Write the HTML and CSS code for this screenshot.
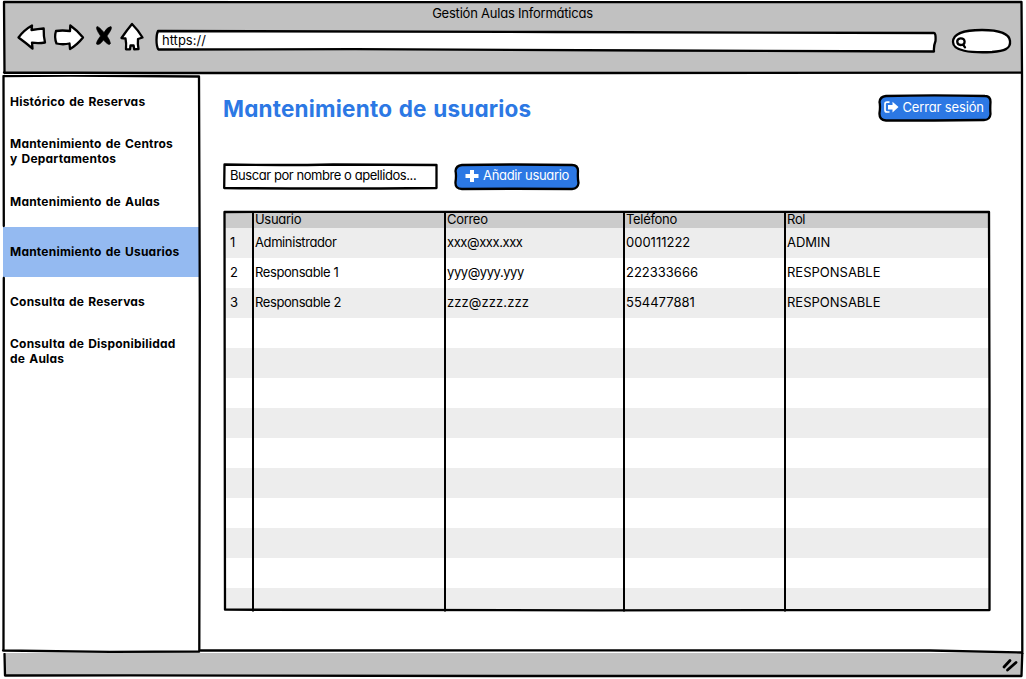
FILE: index.html
```html
<!DOCTYPE html>
<html lang="es">
<head>
<meta charset="utf-8">
<title>Gestión Aulas Informáticas</title>
<link rel="stylesheet" href="styles.css">
</head>
<body>
<div class="browser">
  <header class="chrome">
    <svg class="sketch" viewBox="0 0 1026 75" width="1026" height="75">
      <path class="gray" d="M4 2H1022V73H4Z"/>
      <path class="ink" d="M4.500 73L4 2L500 2.200L1021.500 2L1022 75M4 72.500L150 73L600 73L1022 72.600"/>
    </svg>
    <div class="chrome-title">Gestión Aulas Informáticas</div>
    <div class="toolbar">
      <svg class="nav-icons" viewBox="16 22 130 30" width="130" height="30">
        <path class="ink paper" d="M18.500 37.500Q24 30 32 25.500L31.500 30Q38 29 43.700 28.500Q43.500 36 45 42.500Q39 43.500 32 42.700L32.500 48.500Q26 43 18.500 37.500Z"/>
        <path class="ink paper" d="M56 31Q62 30 70 31L70.300 25.500Q78 31 83 37.500Q77 45 70 49L69.500 43.500Q63 45 56.500 43.500Q54 37 56 31Z"/>
        <path class="cross" d="M97 26.500Q99 26.500 104 32.500Q107 27 111 26.500Q113 28 107 36Q110 40 110.500 43.500Q109 46.500 103.500 40Q99 46 96.500 44Q96 42 100.500 36Q95 28 97 26.500Z"/>
        <path class="ink paper" d="M132 24Q138 30 142.500 37.500L138 39Q137.500 44 138.500 49L134.200 49.300L133.600 45.500L130.500 45.500L130 49.300L126 49.300Q126.500 43 125.500 38.500L121.500 38Q127 30 132 24Z"/>
      </svg>
      <div class="address">
        <svg class="sketch" viewBox="0 0 782 24" width="782" height="24"><path class="ink paper" d="M3 2Q1.500 5 1.500 11Q1.500 18 3.500 20.500L200 20.200L500 21.500L779 22.500Q778.500 17 780.500 12Q781 4 779 4L400 3Z"/></svg>
        <span class="url">https://</span>
      </div>
      <svg class="search-pill" viewBox="950 28 62 26" width="62" height="26">
        <path class="ink paper" d="M953 42C953 33 966 30 982 30C996 30 1009 32 1010 41C1011 49 1004 51 992 52C970 53 953 51 953 42Z"/>
        <path class="lens" d="M960.500 38.300C965.800 38 966 44.800 960.800 45C956.200 44.800 956 38.800 960.500 38.300ZM963 44.500L965 47.300"/>
      </svg>
    </div>
  </header>

  <div class="page">
    <svg class="sketch top-layer" viewBox="0 75 1026 579" width="1026" height="579">
      <path class="ink" d="M3.500 650.500L3.800 278M3.800 226L3.500 76L70 75.500L199 76.500L199.800 300L199.300 651.500L110 651.800L3 650.500M201 650.500L700 650.400L930 650.500L1022 652.500M1022 75L1022.300 654"/>
    </svg>
    <nav class="sidebar">
      <a class="item">Histórico de Reservas</a>
      <a class="item two">Mantenimiento de Centros<br>y Departamentos</a>
      <a class="item">Mantenimiento de Aulas</a>
      <a class="item active">Mantenimiento de Usuarios</a>
      <a class="item">Consulta de Reservas</a>
      <a class="item two">Consulta de Disponibilidad<br>de Aulas</a>
    </nav>
    <main class="main">
      <div class="heading">
        <h1>Mantenimiento de usuarios</h1>
        <div class="button logout">
          <svg class="sketch" viewBox="0 0 114 28" width="114" height="28"><path class="ink blue" d="M8 2Q55 .8 107 2Q112.500 2 112.500 8Q112 15 112.500 20Q112 26 106 26Q55 26.500 8 26.500Q1 26 1.500 19Q2.500 12 1.500 8Q2 2.500 8 2Z"/></svg>
          <svg class="icon" viewBox="0 0 15 13" width="15" height="13"><path class="door" d="M5.500 1.200H3Q1 1.200 1 3.200V9Q1 11 3 11H5.500"/><path class="white" d="M4 4H8.500V.8L14.500 6.100L8.500 11.500V8.500H4Z"/></svg>
          <span>Cerrar sesión</span>
        </div>
      </div>
      <div class="actions">
        <div class="filter">
          <svg class="sketch" viewBox="0 0 215 27" width="215" height="27"><path class="ink paper" d="M1.500 1.500Q60 2.500 110 1.500L213.500 2L213.500 25Q100 26 1.200 25Z"/></svg>
          <span>Buscar por nombre o apellidos...</span>
        </div>
        <div class="button add">
          <svg class="sketch" viewBox="0 0 126 28" width="126" height="28"><path class="ink blue" d="M8 2Q60 1 118 2Q124 2 124 8Q123.500 15 124.500 20Q124 25.500 118 26Q60 25.500 8 26Q1 26 1.500 19Q2.500 12 1.500 8Q2 2.500 8 2Z"/></svg>
          <svg class="icon" viewBox="0 0 14 14" width="14" height="14"><path class="white" d="M5 1H9V5H13.500V9H9V13H5V9H.5V5H5Z"/></svg>
          <span>Añadir usuario</span>
        </div>
      </div>
      <div class="table-wrap">
        <svg class="sketch top-layer" viewBox="223 210 769 403" width="769" height="403">
          <path class="ink" d="M225 609.500L224.500 212L400 211.800L989 212L989.500 400L989.500 610L600 610.300L225 609.700"/>
          <path class="rule" d="M253 211V611.500M445 211V611.500M624 211V611.500M785 211V611.500"/>
        </svg>
        <table>
          <colgroup><col class="c0"><col class="c1"><col class="c2"><col class="c3"><col class="c4"></colgroup>
          <thead><tr><th></th><th>Usuario</th><th>Correo</th><th>Teléfono</th><th>Rol</th></tr></thead>
          <tbody>
            <tr><td>1</td><td class="name">Administrador</td><td class="mail">xxx@xxx.xxx</td><td>000111222</td><td>ADMIN</td></tr>
            <tr><td>2</td><td class="name">Responsable 1</td><td class="mail">yyy@yyy.yyy</td><td>222333666</td><td>RESPONSABLE</td></tr>
            <tr><td>3</td><td class="name">Responsable 2</td><td class="mail wide">zzz@zzz.zzz</td><td>554477881</td><td>RESPONSABLE</td></tr>
            <tr><td></td><td></td><td></td><td></td><td></td></tr>
            <tr><td></td><td></td><td></td><td></td><td></td></tr>
            <tr><td></td><td></td><td></td><td></td><td></td></tr>
            <tr><td></td><td></td><td></td><td></td><td></td></tr>
            <tr><td></td><td></td><td></td><td></td><td></td></tr>
            <tr><td></td><td></td><td></td><td></td><td></td></tr>
            <tr><td></td><td></td><td></td><td></td><td></td></tr>
            <tr><td></td><td></td><td></td><td></td><td></td></tr>
            <tr><td></td><td></td><td></td><td></td><td></td></tr>
            <tr class="cut"><td></td><td></td><td></td><td></td><td></td></tr>
          </tbody>
        </table>
      </div>
    </main>
  </div>

  <footer class="status">
    <svg class="sketch" viewBox="0 653 1026 26" width="1026" height="26">
      <path class="gray" d="M5 653H1022V676H5Z"/>
      <path class="ink" d="M4.500 654L5 675.500L130 675.300L500 676L1021.500 676L1022.300 653"/>
      <path class="grip" d="M1004 667L1010 660.500M1007.500 670L1016 662.500"/>
    </svg>
  </footer>
</div>
</body>
</html>
```
FILE: styles.css
```css
* { box-sizing: border-box; }
body {
  margin: 0;
  background: #fff;
  color: #000;
  font-family: Inter, "Open Sans", sans-serif;
  font-feature-settings: "cv11";
  font-size: 13px;
  line-height: 15px;
  white-space: nowrap;
}
.browser { display: flex; flex-direction: column; width: 1026px; height: 679px; overflow: hidden; }
.chrome, .page, .status, .address, .button, .filter, .table-wrap { position: relative; }
.sketch { position: absolute; left: 0; top: 0; z-index: 0; }
.top-layer { z-index: 2; }
.ink { fill: none; stroke: #000; stroke-width: 2.3; stroke-linejoin: round; stroke-linecap: round; }
.ink.paper { fill: #fff; }
.ink.blue { fill: #2c78e4; }
.gray { fill: #c1c1c1; }
.rule { fill: none; stroke: #000; stroke-width: 2; }
.white { fill: #fff; }
.door { fill: none; stroke: #fff; stroke-width: 1.7; }
.cross { stroke: #000; stroke-width: .6; }
.lens { fill: none; stroke: #000; stroke-width: 2.3; stroke-linecap: round; }
.grip { fill: none; stroke: #000; stroke-width: 2.8; stroke-linecap: round; }

.chrome { flex: 0 0 75px; padding-top: 6px; }
.chrome-title { position: relative; text-align: center; height: 15px; padding-right: 1px; letter-spacing: -.22px; }
.toolbar { position: relative; display: flex; align-items: flex-start; padding: 1px 0 0 16px; }
.address { width: 782px; height: 24px; margin: 7px 0 0 9px; padding: 4px 0 0 7px; }
.url { position: relative; }
.search-pill { margin: 6px 0 0 13px; }

.page { flex: 0 0 578px; display: flex; }
.sidebar { flex: 0 0 201px; padding: 2px 2px 0 3px; font-size: 12px; font-weight: 700; letter-spacing: .22px; word-spacing: 1px; }
.item { display: flex; align-items: center; height: 50px; padding: 0 0 1px 7px; }
.item.two { padding-bottom: 3px; }
.item.active { background: #94baf1; }

.main { flex: 1; padding: 19px 0 0 22px; }
.heading { display: flex; justify-content: space-between; width: 768.500px; }
h1 { margin: 0; padding-top: 1px; color: #2c78e4; font-size: 22.5px; line-height: 28px; font-weight: 700; letter-spacing: .2px; word-spacing: 1px; }
.button { display: flex; align-items: center; height: 28px; color: #fff; }
.button .icon, .button span, .filter span { position: relative; }
.logout { width: 114px; padding: 0 0 2px 6px; gap: 4px; letter-spacing: -.15px; }
.actions { display: flex; margin-top: 40px; gap: 16px; }
.filter { width: 215px; height: 27px; padding: 5px 0 0 7px; letter-spacing: -.44px; }
.add { width: 126px; padding: 0 0 3px 11px; gap: 4px; letter-spacing: -.32px; }
.table-wrap { margin-top: 19px; height: 403px; padding: 1px 0 0 2px; }
table { width: 765px; table-layout: fixed; border-collapse: collapse; }
.c0 { width: 28px; }
.c1 { width: 192px; }
.c2 { width: 179px; }
.c3 { width: 161px; }
.c4 { width: 205px; }
th { height: 17px; padding: 0 0 1px 2px; background: #cbcbcb; font-weight: 400; text-align: left; line-height: 15px; letter-spacing: -.3px; }
td { height: 30px; padding: 0 0 2px 2px; }
td:first-child { padding-left: 5px; }
tbody tr:nth-child(odd) { background: #ededed; }
.name { letter-spacing: -.4px; }
.mail { letter-spacing: -.42px; }
.mail.wide { letter-spacing: .1px; }
.cut td { height: 22px; }
.status { flex: 0 0 26px; }
```
